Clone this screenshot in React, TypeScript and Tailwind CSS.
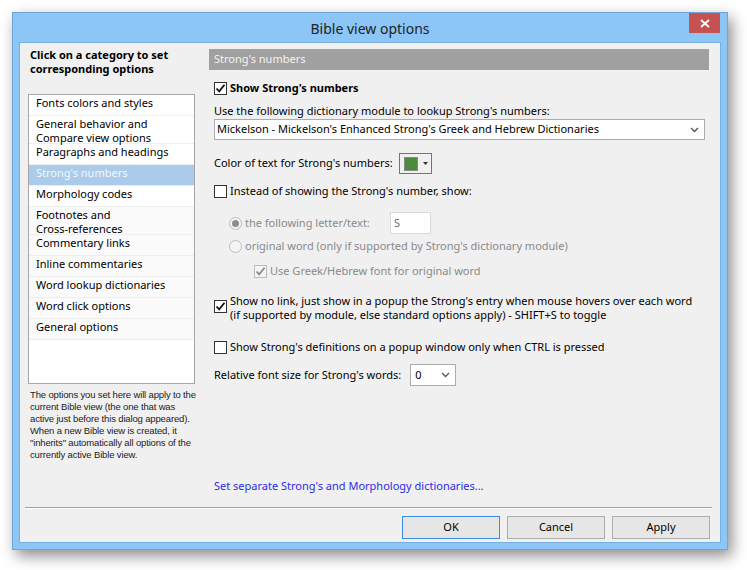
import React from 'react';

const categories = [
    { label: ['Fonts colors and styles'] },
    { label: ['General behavior and', 'Compare view options'] },
    { label: ['Paragraphs and headings'] },
    { label: ["Strong's numbers"], selected: true },
    { label: ['Morphology codes'] },
    { label: ['Footnotes and', 'Cross-references'] },
    { label: ['Commentary links'] },
    { label: ['Inline commentaries'] },
    { label: ['Word lookup dictionaries'] },
    { label: ['Word click options'] },
    { label: ['General options'] },
];

const noteLines = [
    'The options you set here will apply to the',
    'current Bible view (the one that was',
    'active just before this dialog appeared).',
    'When a new Bible view is created, it',
    '"inherits" automatically all options of the',
    'currently active Bible view.',
];

const Check = ({ checked, disabled }: { checked?: boolean; disabled?: boolean }) => (
    <span
        className={`flex h-[13px] w-[13px] shrink-0 items-center justify-center border ${disabled ? 'border-[#bcbcbc] bg-[#f4f4f4]' : 'border-[#333333] bg-white'}`}
    >
        {checked && (
            <svg width="11" height="11" viewBox="0 0 11 11">
                <path
                    d="M1.5 5.5 L4.2 8.3 L9.5 1.8"
                    fill="none"
                    stroke={disabled ? '#8c8c8c' : '#111111'}
                    strokeWidth="1.8"
                />
            </svg>
        )}
    </span>
);

const Radio = ({ checked }: { checked?: boolean }) => (
    <span className="flex h-[13px] w-[13px] shrink-0 items-center justify-center rounded-full border border-[#bcbcbc] bg-[#f4f4f4]">
        {checked && <span className="h-[7px] w-[7px] rounded-full bg-[#8d8d8d]" />}
    </span>
);

const Chevron = () => (
    <svg width="9" height="6" viewBox="0 0 9 6">
        <path d="M1 1 L4.5 4.5 L8 1" fill="none" stroke="#555555" strokeWidth="1.3" />
    </svg>
);

export default function App() {
    return (
        <div className="h-[570px] w-[747px] bg-white pl-[12px] pt-[12px] font-['Noto_Sans',sans-serif] text-[11px] text-black">
            <div className="flex h-[538px] w-[716px] flex-col border border-[#6fa6da] bg-[#8cc6f7] shadow-[4px_6px_14px_rgba(0,0,0,0.45)]">
                {/* title bar */}
                <div className="grid h-[29px] grid-cols-[1fr_auto_1fr] items-center">
                    <div />
                    <div className="pt-[1px] text-[14px] text-[#222222]">Bible view options</div>
                    <div className="flex justify-end self-start pr-[7px]">
                        <div className="flex h-[20px] w-[31px] items-center justify-center bg-[#c75050]">
                            <svg width="10" height="9" viewBox="0 0 10 9">
                                <path d="M1 1 L9 8 M9 1 L1 8" stroke="#ffffff" strokeWidth="1.8" />
                            </svg>
                        </div>
                    </div>
                </div>

                {/* client area */}
                <div className="mx-[6px] mb-[6px] flex flex-1 flex-col border border-[#78aee0] bg-[#f0f0f0]">
                    <div className="flex flex-1">
                        {/* left column */}
                        <div className="flex w-[189px] flex-col pl-[8px] pt-[5px]">
                            <div className="pl-[2px] font-bold leading-[14px]">
                                Click on a category to set
                                <br />
                                corresponding options
                            </div>
                            <div className="mt-[18px] flex h-[290px] w-[167px] flex-col border border-[#a6a6a6] bg-white">
                                {categories.map((c, i) => (
                                    <div
                                        key={i}
                                        className={`border-b border-[#eeeeee] pl-[7px] pt-[1px] leading-[13.5px] ${c.label.length > 1 ? 'h-[28px]' : 'h-[21px]'} ${c.selected ? 'bg-[#aacbea] text-[#f4f7fb]' : i > 4 ? 'bg-[#fafafa]' : ''}`}
                                    >
                                        {c.label.map((l, j) => (
                                            <div key={j}>{l}</div>
                                        ))}
                                    </div>
                                ))}
                            </div>
                            <div className="mt-[5px] whitespace-nowrap pl-[2px] font-['Liberation_Sans',sans-serif] text-[9.5px] leading-[12px] tracking-[-0.15px] text-[#222222]">
                                {noteLines.map((l, i) => (
                                    <div key={i}>{l}</div>
                                ))}
                            </div>
                        </div>

                        {/* right column */}
                        <div className="flex w-[500px] flex-col pt-[6px]">
                            <div className="flex h-[21px] items-center bg-[#a0a0a0] pl-[5px] text-[#f4f4f4]">Strong's numbers</div>
                            <div className="flex flex-1 flex-col pl-[5px]">
                                <div className="mt-[10px] flex h-[16px] items-center gap-[3px]">
                                    <Check checked />
                                    <span className="font-bold">Show Strong's numbers</span>
                                </div>
                                <div className="mt-[7px] flex h-[16px] items-center">Use the following dictionary module to lookup Strong's numbers:</div>
                                <div className="flex h-[21px] w-[491px] items-center justify-between border border-[#acacac] bg-white pl-[2px] pr-[5px]">
                                    <span>Mickelson - Mickelson's Enhanced Strong's Greek and Hebrew Dictionaries</span>
                                    <Chevron />
                                </div>
                                <div className="mt-[13px] flex h-[21px] items-center gap-[6px]">
                                    <span>Color of text for Strong's numbers:</span>
                                    <div className="flex h-[21px] w-[33px] items-center gap-[5px] border border-[#3f9a3f] pl-[4px]">
                                        <span className="h-[14px] w-[14px] border border-[#8a8a8a] bg-[#4b8b3b]" />
                                        <svg width="5" height="3" viewBox="0 0 5 3">
                                            <path d="M0 0 L5 0 L2.5 3 Z" fill="#333333" />
                                        </svg>
                                    </div>
                                </div>
                                <div className="mt-[9px] flex h-[16px] items-center gap-[3px]">
                                    <Check />
                                    <span>Instead of showing the Strong's number, show:</span>
                                </div>
                                <div className="mt-[13px] flex h-[22px] items-center pl-[15px] text-[#8a8a8a]">
                                    <Radio checked />
                                    <span className="ml-[3px] w-[145px]">the following letter/text:</span>
                                    <div className="flex h-[22px] w-[41px] items-center border border-[#d9d9d9] bg-white pl-[3px] text-[#6a6a6a]">S</div>
                                </div>
                                <div className="mt-[4px] flex h-[16px] items-center gap-[3px] pl-[15px] text-[#8a8a8a]">
                                    <Radio />
                                    <span>original word (only if supported by Strong's dictionary module)</span>
                                </div>
                                <div className="mt-[9px] flex h-[16px] items-center gap-[3px] pl-[40px] text-[#8a8a8a]">
                                    <Check checked disabled />
                                    <span>Use Greek/Hebrew font for original word</span>
                                </div>
                                <div className="mt-[15px] flex gap-[3px]">
                                    <div className="pt-[6px]">
                                        <Check checked />
                                    </div>
                                    <div className="whitespace-nowrap leading-[13.5px]">
                                        Show no link, just show in a popup the Strong's entry when mouse hovers over each word
                                        <br />
                                        (if supported by module, else standard options apply) - SHIFT+S to toggle
                                    </div>
                                </div>
                                <div className="mt-[18px] flex h-[16px] items-center gap-[3px]">
                                    <Check />
                                    <span>Show Strong's definitions on a popup window only when CTRL is pressed</span>
                                </div>
                                <div className="mt-[9px] flex h-[22px] items-center gap-[9px]">
                                    <span>Relative font size for Strong's words:</span>
                                    <div className="flex h-[22px] w-[46px] items-center justify-between border border-[#acacac] bg-white pl-[4px] pr-[5px]">
                                        <span>0</span>
                                        <Chevron />
                                    </div>
                                </div>
                                <div className="mb-[13px] mt-auto flex h-[16px] items-center text-[#2c2ce6]">
                                    Set separate Strong's and Morphology dictionaries...
                                </div>
                            </div>
                        </div>
                    </div>

                    {/* separator + buttons */}
                    <div className="ml-[5px] mr-[8px] border-b border-t border-b-white border-t-[#a0a0a0]" />
                    <div className="mb-[3px] mt-[7px] flex justify-end gap-[7px] pr-[10px]">
                        <button className="h-[23px] w-[98px] border border-[#3c8ce0] bg-[#e6e6e6]">OK</button>
                        <button className="h-[23px] w-[98px] border border-[#adadad] bg-[#e6e6e6]">Cancel</button>
                        <button className="h-[23px] w-[98px] border border-[#adadad] bg-[#e6e6e6]">Apply</button>
                    </div>
                </div>
            </div>
        </div>
    );
}
